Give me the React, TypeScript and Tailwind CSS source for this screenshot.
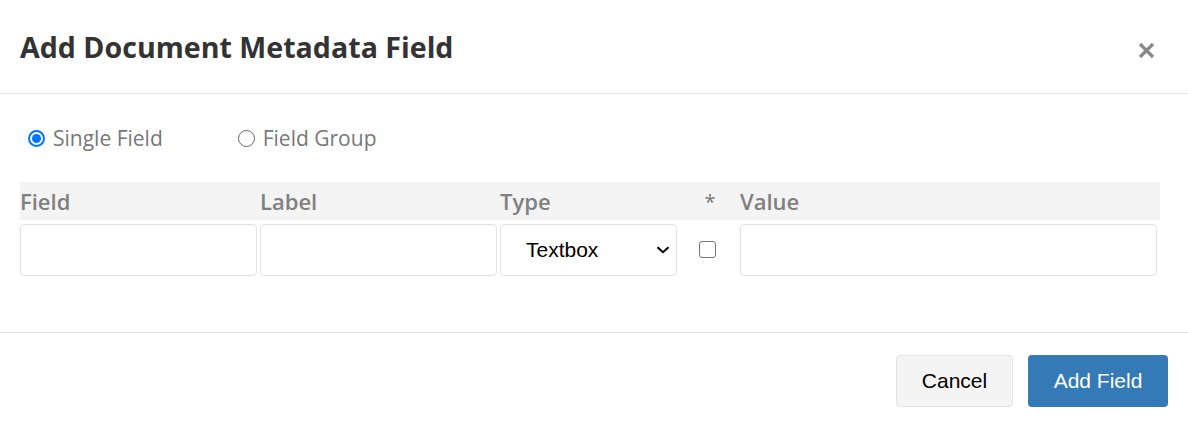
import { useState } from 'react'

const ui = { fontFamily: '"Open Sans", "Noto Sans", sans-serif' }
const arial = { fontFamily: '"Liberation Sans", Arial, sans-serif' }

const columns = [
  { key: 'field', label: 'Field', width: 'w-[240px]' },
  { key: 'label', label: 'Label', width: 'w-[240px]' },
  { key: 'type', label: 'Type', width: 'w-[180px]' },
  { key: 'required', label: '*', width: 'w-[60px]' },
  { key: 'value', label: 'Value', width: 'w-[420px]' },
]

const Radio = ({ checked, label, onClick }: { checked: boolean; label: string; onClick: () => void }) => (
  <button type="button" onClick={onClick} className="flex items-center gap-[8px] text-[21px] text-[#777]">
    <span
      className={
        checked
          ? 'flex h-[17px] w-[17px] items-center justify-center rounded-full border-[2px] border-[#0075ff] bg-white'
          : 'flex h-[17px] w-[17px] items-center justify-center rounded-full border border-[#666] bg-white'
      }
    >
      {checked && <span className="h-[9px] w-[9px] rounded-full bg-[#0075ff]" />}
    </span>
    {label}
  </button>
)

export default function App() {
  const [mode, setMode] = useState<'single' | 'group'>('single')
  const [required, setRequired] = useState(false)

  return (
    <div className="h-[426px] w-[1188px] overflow-hidden bg-white text-[#333]" style={ui}>
      {/* header */}
      <div className="flex h-[94px] items-center justify-between border-b border-[#e5e5e5] pl-[20px] pr-[33px]">
        <h4 className="pt-[2px] text-[28.6px] font-bold text-[#333]">Add Document Metadata Field</h4>
        <button type="button" aria-label="Close" className="mt-[8px] text-[#888]">
          <svg width="17" height="17" viewBox="0 0 17 17" fill="none">
            <path d="M2 2L15 15M15 2L2 15" stroke="currentColor" strokeWidth="3.2" />
          </svg>
        </button>
      </div>

      {/* body */}
      <div className="h-[239px] border-b border-[#e5e5e5] px-[20px] pt-[29px]">
        <div className="flex items-center gap-[75px] pl-[8px]">
          <Radio checked={mode === 'single'} label="Single Field" onClick={() => setMode('single')} />
          <Radio checked={mode === 'group'} label="Field Group" onClick={() => setMode('group')} />
        </div>

        <table className="mt-[27px] border-collapse">
          <thead>
            <tr className="bg-[#f4f4f4]">
              {columns.map((c) => (
                <th
                  key={c.key}
                  className={
                    c.key === 'required'
                      ? `${c.width} h-[38px] pt-[2px] text-center text-[20px] font-normal text-[#777]`
                      : `${c.width} h-[38px] pt-[2px] text-left text-[22px] font-semibold text-[#808080]`
                  }
                >
                  {c.label}
                </th>
              ))}
            </tr>
          </thead>
          <tbody>
            <tr>
              <td className="pr-[3px] pt-[4px]">
                <input className="block h-[52px] w-full rounded-[4px] border border-[#e3e3e3] px-[10px] text-[21px] outline-none" style={arial} />
              </td>
              <td className="pr-[3px] pt-[4px]">
                <input className="block h-[52px] w-full rounded-[4px] border border-[#e3e3e3] px-[10px] text-[21px] outline-none" style={arial} />
              </td>
              <td className="pr-[3px] pt-[4px]">
                <div className="relative">
                  <select
                    defaultValue="Textbox"
                    className="block h-[52px] w-full appearance-none rounded-[4px] border border-[#e3e3e3] bg-white pl-[25px] text-[21px] text-black outline-none"
                    style={arial}
                  >
                    <option>Textbox</option>
                    <option>Textarea</option>
                    <option>Dropdown</option>
                    <option>Date</option>
                  </select>
                  <svg className="pointer-events-none absolute right-[7px] top-[22px]" width="14" height="8" viewBox="0 0 14 8" fill="none">
                    <path d="M1.5 1.2L7 6.2L12.5 1.2" stroke="#000" strokeWidth="2" />
                  </svg>
                </div>
              </td>
              <td className="pt-[4px] text-center">
                <button
                  type="button"
                  aria-label="Required"
                  onClick={() => setRequired(!required)}
                  className={
                    required
                      ? 'ml-[19px] block h-[17px] w-[17px] rounded-[3px] border border-[#0075ff] bg-[#0075ff]'
                      : 'ml-[19px] block h-[17px] w-[17px] rounded-[3px] border border-[#767676] bg-white'
                  }
                />
              </td>
              <td className="pr-[3px] pt-[4px]">
                <input className="block h-[52px] w-full rounded-[4px] border border-[#e3e3e3] px-[10px] text-[21px] outline-none" style={arial} />
              </td>
            </tr>
          </tbody>
        </table>
      </div>

      {/* footer */}
      <div className="flex justify-end gap-[15px] pr-[20px] pt-[22px]" style={arial}>
        <button type="button" className="h-[52px] w-[117px] rounded-[4px] border border-[#e3e3e3] bg-[#f4f4f4] text-[21px] text-black">
          Cancel
        </button>
        <button type="button" className="h-[52px] w-[140px] rounded-[4px] bg-[#337ab7] text-[21px] text-white">
          Add Field
        </button>
      </div>
    </div>
  )
}
